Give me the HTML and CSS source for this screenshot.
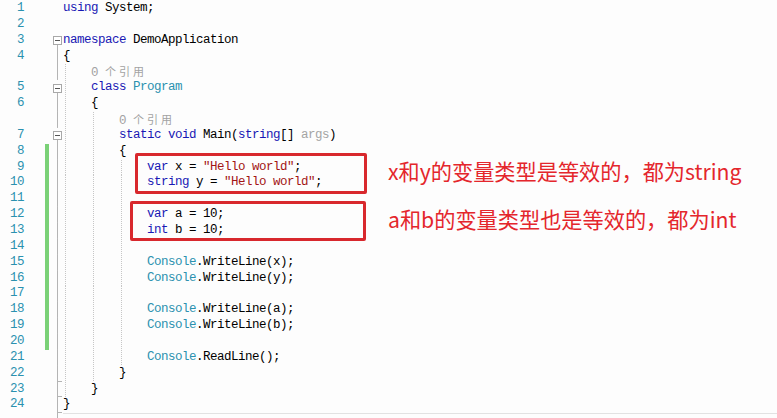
FILE: index.html
```html
<!DOCTYPE html>
<html lang="zh-CN">
<head>
<meta charset="utf-8">
<title>DemoApplication</title>
<link rel="stylesheet" href="styles.css">
</head>
<body>
<div class="editor">
  <div class="row"><span class="num">1</span><span class="chg"></span><span class="fold"></span><span class="code"><span class="kw">using</span> System;</span></div>
  <div class="row"><span class="num">2</span><span class="chg"></span><span class="fold"></span><span class="code"></span></div>
  <div class="row"><span class="num">3</span><span class="chg"></span><span class="fold open"><span class="box"></span></span><span class="code"><span class="kw">namespace</span> DemoApplication</span></div>
  <div class="row"><span class="num">4</span><span class="chg"></span><span class="fold ln"></span><span class="code">{</span></div>
  <div class="row"><span class="num"></span><span class="chg"></span><span class="fold ln"></span><span class="code"><span class="ind"></span><span class="lens">0 <span class="cjk">个引用</span></span></span></div>
  <div class="row"><span class="num">5</span><span class="chg"></span><span class="fold open"><span class="box"></span></span><span class="code"><span class="ind"></span><span class="kw">class</span> <span class="ty">Program</span></span></div>
  <div class="row"><span class="num">6</span><span class="chg"></span><span class="fold ln"></span><span class="code"><span class="ind"></span>{</span></div>
  <div class="row"><span class="num"></span><span class="chg"></span><span class="fold ln"></span><span class="code"><span class="ind"></span><span class="ind"></span><span class="lens">0 <span class="cjk">个引用</span></span></span></div>
  <div class="row"><span class="num">7</span><span class="chg"></span><span class="fold open"><span class="box"></span></span><span class="code"><span class="ind"></span><span class="ind"></span><span class="kw">static</span> <span class="kw">void</span> Main(<span class="kw">string</span>[] <span class="gr">args</span>)</span></div>
  <div class="row"><span class="num">8</span><span class="chg on"></span><span class="fold ln"></span><span class="code"><span class="ind"></span><span class="ind"></span>{</span></div>
  <div class="row"><span class="num">9</span><span class="chg on"></span><span class="fold ln"></span><span class="code"><span class="ind"></span><span class="ind"></span><span class="ind"></span><span class="kw">var</span> x = <span class="str">"Hello world"</span>;</span></div>
  <div class="row"><span class="num">10</span><span class="chg on"></span><span class="fold ln"></span><span class="code"><span class="ind"></span><span class="ind"></span><span class="ind"></span><span class="kw">string</span> y = <span class="str">"Hello world"</span>;</span></div>
  <div class="row"><span class="num">11</span><span class="chg on"></span><span class="fold ln"></span><span class="code"><span class="ind"></span><span class="ind"></span><span class="ind"></span></span></div>
  <div class="row"><span class="num">12</span><span class="chg on"></span><span class="fold ln"></span><span class="code"><span class="ind"></span><span class="ind"></span><span class="ind"></span><span class="kw">var</span> a = 10;</span></div>
  <div class="row"><span class="num">13</span><span class="chg on"></span><span class="fold ln"></span><span class="code"><span class="ind"></span><span class="ind"></span><span class="ind"></span><span class="kw">int</span> b = 10;</span></div>
  <div class="row"><span class="num">14</span><span class="chg on"></span><span class="fold ln"></span><span class="code"><span class="ind"></span><span class="ind"></span><span class="ind"></span></span></div>
  <div class="row"><span class="num">15</span><span class="chg on"></span><span class="fold ln"></span><span class="code"><span class="ind"></span><span class="ind"></span><span class="ind"></span><span class="ty">Console</span>.WriteLine(x);</span></div>
  <div class="row"><span class="num">16</span><span class="chg on"></span><span class="fold ln"></span><span class="code"><span class="ind"></span><span class="ind"></span><span class="ind"></span><span class="ty">Console</span>.WriteLine(y);</span></div>
  <div class="row"><span class="num">17</span><span class="chg on"></span><span class="fold ln"></span><span class="code"><span class="ind"></span><span class="ind"></span><span class="ind"></span></span></div>
  <div class="row"><span class="num">18</span><span class="chg on"></span><span class="fold ln"></span><span class="code"><span class="ind"></span><span class="ind"></span><span class="ind"></span><span class="ty">Console</span>.WriteLine(a);</span></div>
  <div class="row"><span class="num">19</span><span class="chg on"></span><span class="fold ln"></span><span class="code"><span class="ind"></span><span class="ind"></span><span class="ind"></span><span class="ty">Console</span>.WriteLine(b);</span></div>
  <div class="row"><span class="num">20</span><span class="chg on"></span><span class="fold ln"></span><span class="code"><span class="ind"></span><span class="ind"></span><span class="ind"></span></span></div>
  <div class="row"><span class="num">21</span><span class="chg"></span><span class="fold ln"></span><span class="code"><span class="ind"></span><span class="ind"></span><span class="ind"></span><span class="ty">Console</span>.ReadLine();</span></div>
  <div class="row"><span class="num">22</span><span class="chg"></span><span class="fold end"></span><span class="code"><span class="ind"></span><span class="ind"></span>}</span></div>
  <div class="row"><span class="num">23</span><span class="chg"></span><span class="fold end"></span><span class="code"><span class="ind"></span>}</span></div>
  <div class="row"><span class="num">24</span><span class="chg"></span><span class="fold end"></span><span class="code">}</span></div>
  <div class="row last"><span class="num"></span><span class="chg"></span><span class="fold ln"></span><span class="code"></span></div>

  <div class="mark mark-1"></div>
  <div class="mark mark-2"></div>
  <div class="note note-1">x和y的变量类型是等效的，都为string</div>
  <div class="note note-2">a和b的变量类型也是等效的，都为int</div>
</div>
</body>
</html>
```

FILE: styles.css
```css
html, body {
  margin: 0;
  padding: 0;
}

body {
  width: 777px;
  height: 418px;
  overflow: hidden;
  background: #fdfdfd;
}

.editor {
  position: relative;
  padding-top: 1px;
  font-family: "Liberation Mono", "DejaVu Sans Mono", monospace;
  font-size: 12.5px;
  letter-spacing: -0.5px;
  color: #000;
}

.row {
  display: flex;
  height: 15.86px;
  line-height: 15.86px;
}

.num {
  flex: none;
  width: 24px;
  text-align: right;
  color: #2b91af;
}

.chg {
  flex: none;
  width: 4px;
  margin-left: 21px;
}

.chg.on {
  background: #7ad177;
}

.fold {
  flex: none;
  width: 9px;
  margin-left: 4px;
  display: flex;
  align-items: center;
  justify-content: center;
}

.fold.ln {
  background: linear-gradient(#b4b4b4, #b4b4b4) center / 1px 100% no-repeat;
}

.fold.open {
  background: linear-gradient(#b4b4b4, #b4b4b4) center bottom / 1px 50% no-repeat;
}

.fold.end {
  background:
    linear-gradient(#b4b4b4, #b4b4b4) 4px 0 / 1px 100% no-repeat,
    linear-gradient(#b4b4b4, #b4b4b4) 4px 100% / 5px 1px no-repeat;
}

.box {
  width: 9px;
  height: 9px;
  box-sizing: border-box;
  border: 1px solid #a8a8a8;
  background: #fff;
  display: flex;
  align-items: center;
  justify-content: center;
}

.box::after {
  content: "";
  width: 5px;
  height: 1px;
  background: #555;
}

.code {
  flex: 1;
  margin-left: 1px;
  white-space: pre;
}

.row.last .code {
  border-top: 1px solid #e2e2e2;
}

.ind {
  display: inline-block;
  width: 28px;
  height: 15.86px;
  vertical-align: top;
  background-image: repeating-linear-gradient(to bottom, #c6c6c6 0 1px, transparent 1px 2px);
  background-size: 1px 100%;
  background-position: 2px 0;
  background-repeat: no-repeat;
}

.kw { color: #1818b4; }
.ty { color: #2b91af; }
.str { color: #a31515; }
.gr { color: #a4a4a4; }
.lens { color: #a2a2a2; }

.cjk {
  font-family: "Noto Sans CJK SC", sans-serif;
  font-size: 11px;
  letter-spacing: 3px;
}

.mark {
  position: absolute;
  box-sizing: border-box;
  border: 3px solid #d8282d;
  border-radius: 2px;
}

.mark-1 {
  left: 135px;
  top: 153px;
  width: 232px;
  height: 41px;
}

.mark-2 {
  left: 130px;
  top: 201px;
  width: 236px;
  height: 40px;
}

.note {
  position: absolute;
  left: 388px;
  font-family: "Noto Sans CJK SC", sans-serif;
  font-size: 21.2px;
  line-height: 22px;
  letter-spacing: 0;
  color: #e4262c;
  white-space: nowrap;
}

.note-1 { top: 160px; }
.note-2 { top: 208px; }
```
